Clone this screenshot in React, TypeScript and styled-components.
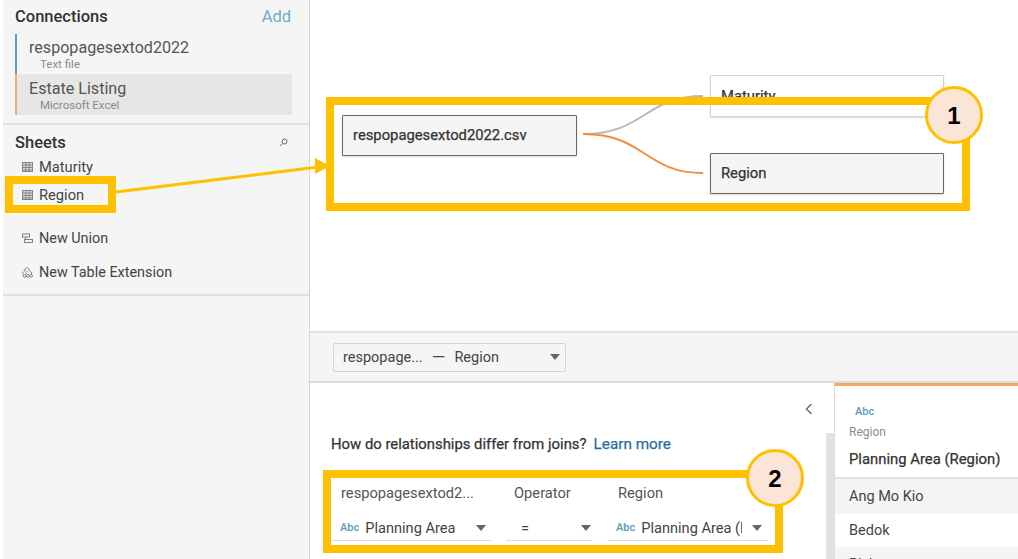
import styled, { createGlobalStyle } from 'styled-components'

const GlobalStyle = createGlobalStyle`
  html, body {
    margin: 0;
    padding: 0;
    background: #fff;
    font-family: Roboto, "Noto Sans", sans-serif;
    color: #333;
  }
  * { box-sizing: border-box; }
`

const Page = styled.div`
  position: relative;
  width: 1018px;
  height: 559px;
  overflow: hidden;
  display: flex;
  padding-left: 3px;
`

const Sidebar = styled.aside`
  width: 307px;
  height: 100%;
  flex: none;
  background: #f5f5f5;
  border-right: 1px solid #d6d6d6;
`

const Section = styled.section`
  border-bottom: 2px solid #e0e0e0;
`

const Connections = styled(Section)`
  height: 125px;
  padding: 5px 17px 0 12px;
`

const Sheets = styled(Section)`
  height: 171px;
  padding: 6px 17px 0 12px;
`

const SectionHead = styled.div`
  display: flex;
  justify-content: space-between;
  align-items: center;
  height: 22px;
`

const SectionTitle = styled.h2`
  margin: 0;
  font-size: 16.5px;
  font-weight: 500;
  color: #333;
`

const AddLink = styled.span`
  font-size: 16.5px;
  margin-right: 1px;
  color: #6bacc9;
`

const ConnectionList = styled.div`
  margin-top: 7px;
`

const Connection = styled.div<{ $color: string; $active?: boolean }>`
  height: ${p => (p.$active ? 41 : 40)}px;
  padding: ${p => (p.$active ? 5 : 4)}px 0 0 12px;
  border-left: 2px solid ${p => p.$color};
  background: ${p => (p.$active ? '#e6e6e6' : 'transparent')};
`

const ConnectionName = styled.div`
  font-size: 16.1px;
  line-height: 20px;
  color: #555;
`

const ConnectionType = styled.div`
  margin-left: 11px;
  font-size: 11.5px;
  line-height: 13px;
  color: #8a8a8a;
`

const SheetRow = styled.div<{ $gap?: number; $size?: number }>`
  display: flex;
  align-items: center;
  gap: 6px;
  height: 20px;
  margin-top: ${p => p.$gap ?? 0}px;
  padding-left: 7px;
  font-size: ${p => p.$size ?? 14.7}px;
  color: #444;
`

const Canvas = styled.div`
  position: relative;
  height: 333px;
  flex: none;
  background: #fff;
  border-bottom: 2px solid #e0e0e0;
`

const Node = styled.div<{ $x: number; $y: number; $w: number; $h: number; $muted?: boolean }>`
  position: absolute;
  left: ${p => p.$x}px;
  top: ${p => p.$y}px;
  width: ${p => p.$w}px;
  height: ${p => p.$h}px;
  display: flex;
  align-items: center;
  padding: 0 0 1px 10px;
  font-size: 14.8px;
  -webkit-text-stroke: 0.25px currentColor;
  color: #333;
  background: ${p => (p.$muted ? '#fff' : '#f5f5f5')};
  border: 1px solid ${p => (p.$muted ? '#d4d4d4' : '#666')};
  border-radius: 1px;
  box-shadow: 0 1px 2px rgba(0, 0, 0, 0.15);
`

const Curves = styled.svg`
  position: absolute;
  left: 0;
  top: 0;
`

const Main = styled.main`
  flex: 1;
  min-width: 0;
  display: flex;
  flex-direction: column;
`

const PairBar = styled.div`
  height: 50px;
  flex: none;
  display: flex;
  align-items: center;
  padding: 0 0 0 23px;
  background: #f5f5f5;
  border-bottom: 2px solid #dcdcdc;
`

const PairSelect = styled.div`
  width: 233px;
  height: 29px;
  display: flex;
  align-items: center;
  padding: 0 5px 0 9px;
  gap: 9px;
  font-size: 14.5px;
  color: #444;
  border: 1px solid #d4d4d4;
  border-radius: 2px;
  background: #f5f5f5;
`

const Dash = styled.span`
  font-size: 17.5px;
  line-height: 20px;
`

const Arrow = styled.span<{ $ml?: string }>`
  width: 0;
  height: 0;
  flex: none;
  margin-left: ${p => p.$ml ?? 'auto'};
  border-left: 5px solid transparent;
  border-right: 5px solid transparent;
  border-top: 6px solid #666;
`

const Lower = styled.div`
  flex: 1;
  min-height: 0;
  display: flex;
`

const RelationPane = styled.div`
  width: 524px;
  flex: none;
  position: relative;
  padding: 51px 0 0 21px;
  background: #fff;
`

const Chevron = styled.svg`
  position: absolute;
  left: 495px;
  top: 20px;
`

const Scrollbar = styled.div`
  position: absolute;
  right: 0;
  top: 50px;
  bottom: 0;
  width: 8px;
  background: #e2e2e2;
`

const HelpLine = styled.div`
  font-size: 14.85px;
  -webkit-text-stroke: 0.25px currentColor;
  line-height: 20px;
  color: #333;
`

const LearnMore = styled.span`
  margin-left: 7px;
  font-size: 15.3px;
  color: #1f6fa3;
`

const FieldGrid = styled.div`
  display: grid;
  grid-template-columns: 161px 87px 161px;
  column-gap: 14px;
  margin-top: 29px;
`

const FieldLabel = styled.div`
  height: 20px;
  padding-left: 10px;
  font-size: 14.7px;
  line-height: 20px;
  color: #555;
  white-space: nowrap;
`

const FieldLabelTight = styled(FieldLabel)`
  padding-left: 8px;
`

const RegionLabel = styled(FieldLabel)`
  padding-left: 11px;
`

const FieldSelect = styled.div`
  height: 28px;
  margin-top: 10px;
  display: flex;
  align-items: center;
  padding: 2px 6px 0 9px;
  border-bottom: 1px solid #dcdcdc;
  font-size: 14.6px;
  color: #444;
  overflow: hidden;
`

const TypeTag = styled.span`
  flex: none;
  font-size: 11px;
  font-weight: 500;
  color: #5b9bb8;
`

const FieldValue = styled.span<{ $w?: number }>`
  flex: none;
  margin-left: 6px;
  width: ${p => (p.$w ? `${p.$w}px` : 'auto')};
  overflow: hidden;
  white-space: nowrap;
`

const DataPane = styled.div`
  flex: 1;
  min-width: 0;
  background: #fff;
  border-top: 3px solid #f5a75f;
  border-left: 1px solid #dcdcdc;
`

const DataHead = styled.div`
  height: 93px;
  padding: 18px 0 0 14px;
  border-bottom: 2px solid #e2e2e2;
`

const DataTag = styled(TypeTag)`
  display: block;
  margin-left: 6px;
  line-height: 16px;
`

const DataSource = styled.div`
  margin-top: 5px;
  font-size: 12px;
  line-height: 14px;
  color: #8f8a96;
`

const DataField = styled.div`
  margin-top: 11px;
  font-size: 14.85px;
  -webkit-text-stroke: 0.25px currentColor;
  line-height: 18px;
  color: #333;
  white-space: nowrap;
`

const DataRow = styled.div<{ $shade?: boolean; $h: number }>`
  height: ${p => p.$h}px;
  display: flex;
  align-items: center;
  padding: 0 0 1px 14px;
  font-size: 14.5px;
  color: #444;
  background: ${p => (p.$shade ? '#f5f5f5' : '#fff')};
`

const Callout = styled.div<{ $x: number; $y: number; $w: number; $h: number }>`
  position: absolute;
  left: ${p => p.$x}px;
  top: ${p => p.$y}px;
  width: ${p => p.$w}px;
  height: ${p => p.$h}px;
  border: 8px solid #ffc000;
  pointer-events: none;
`

const Badge = styled.div<{ $x: number; $y: number }>`
  position: absolute;
  left: ${p => p.$x}px;
  top: ${p => p.$y}px;
  width: 58px;
  height: 58px;
  display: flex;
  align-items: center;
  justify-content: center;
  padding-top: 1px;
  border: 3px solid #ffc000;
  border-radius: 50%;
  background: #fbe5d6;
  font-family: "Liberation Sans", sans-serif;
  font-size: 24px;
  font-weight: 700;
  color: #000;
`

const Pointer = styled.svg`
  position: absolute;
  left: 0;
  top: 0;
  pointer-events: none;
`

const SearchSvg = styled.svg`
  margin-right: 4px;
`

const TableIcon = () => (
  <svg width="11" height="10" viewBox="0 0 11 10" fill="none" stroke="#858585" strokeWidth="1">
    <rect x="0.5" y="0.5" width="10" height="9" fill="#dcdcdc" />
    <path d="M0.5 3H10.5M0.5 5.5H10.5M0.5 8H10.5M3.8 0.5V9.5M7.2 0.5V9.5" />
  </svg>
)

const UnionIcon = () => (
  <svg width="11" height="11" viewBox="0 0 11 11" fill="none" stroke="#808080" strokeWidth="1">
    <rect x="0.5" y="1" width="7" height="3" />
    <rect x="2.5" y="6.5" width="8" height="3" />
    <path d="M3.5 4V6.5" />
  </svg>
)

const ExtensionIcon = () => (
  <svg width="11" height="12" viewBox="0 0 11 12" fill="none" stroke="#808080" strokeWidth="1">
    <path d="M1 8.5C0 6.5 2 5.5 2.5 5C2.5 3 4 1 5.5 2C7 2.5 7.5 4 7.5 5C9 5.5 10 6.5 9.5 8" />
    <path d="M4 4.5L6 6.5M3.5 6.5L5 8" />
    <circle cx="2.5" cy="9.8" r="1.4" />
    <circle cx="5.8" cy="9.8" r="1.4" />
    <circle cx="9.1" cy="9.8" r="1.4" />
  </svg>
)

const SearchIcon = () => (
  <SearchSvg width="9" height="9" viewBox="0 0 9 9" fill="none" stroke="#666" strokeWidth="1">
    <circle cx="5.5" cy="3.5" r="2.5" />
    <path d="M3.5 5.5L1 8" />
  </SearchSvg>
)

export default function App() {
  return (
    <Page>
      <GlobalStyle />
      <Sidebar>
        <Connections>
          <SectionHead>
            <SectionTitle>Connections</SectionTitle>
            <AddLink>Add</AddLink>
          </SectionHead>
          <ConnectionList>
            <Connection $color="#5b9fc2">
              <ConnectionName>respopagesextod2022</ConnectionName>
              <ConnectionType>Text file</ConnectionType>
            </Connection>
            <Connection $color="#f5ad6b" $active>
              <ConnectionName>Estate Listing</ConnectionName>
              <ConnectionType>Microsoft Excel</ConnectionType>
            </Connection>
          </ConnectionList>
        </Connections>
        <Sheets>
          <SectionHead>
            <SectionTitle>Sheets</SectionTitle>
            <SearchIcon />
          </SectionHead>
          <SheetRow $gap={4}><TableIcon />Maturity</SheetRow>
          <SheetRow $gap={8}><TableIcon />Region</SheetRow>
          <SheetRow $gap={23} $size={14.4}><UnionIcon />New Union</SheetRow>
          <SheetRow $gap={14} $size={14.4}><ExtensionIcon />New Table Extension</SheetRow>
        </Sheets>
      </Sidebar>
      <Main>
        <Canvas>
          <Curves width="708" height="332" fill="none" strokeWidth="2">
            <path d="M273 134C335 134 335 96 393 96" stroke="#b8b8b8" />
            <path d="M273 134C335 134 335 173 393 173" stroke="#f28e3f" />
          </Curves>
          <Node $x={32} $y={115} $w={235} $h={41}>respopagesextod2022.csv</Node>
          <Node $x={400} $y={75} $w={234} $h={42} $muted>Maturity</Node>
          <Node $x={400} $y={153} $w={234} $h={41}>Region</Node>
        </Canvas>
        <PairBar>
          <PairSelect>
            respopage...<Dash>—</Dash>Region<Arrow />
          </PairSelect>
        </PairBar>
        <Lower>
          <RelationPane>
            <Chevron width="8" height="12" viewBox="0 0 8 12" fill="none" stroke="#666" strokeWidth="1.3">
              <path d="M6.5 1L1.5 6L6.5 11" />
            </Chevron>
            <Scrollbar />
            <HelpLine>
              How do relationships differ from joins?<LearnMore>Learn more</LearnMore>
            </HelpLine>
            <FieldGrid>
              <FieldLabel>respopagesextod2...</FieldLabel>
              <FieldLabelTight>Operator</FieldLabelTight>
              <RegionLabel>Region</RegionLabel>
              <FieldSelect>
                <TypeTag>Abc</TypeTag>
                <FieldValue>Planning Area</FieldValue>
                <Arrow />
              </FieldSelect>
              <FieldSelect>
                <FieldValue $w={60}>=</FieldValue>
                <Arrow />
              </FieldSelect>
              <FieldSelect>
                <TypeTag>Abc</TypeTag>
                <FieldValue $w={101}>Planning Area (Region)</FieldValue>
                <Arrow />
              </FieldSelect>
            </FieldGrid>
          </RelationPane>
          <DataPane>
            <DataHead>
              <DataTag>Abc</DataTag>
              <DataSource>Region</DataSource>
              <DataField>Planning Area (Region)</DataField>
            </DataHead>
            <DataRow $shade $h={35}>Ang Mo Kio</DataRow>
            <DataRow $h={33}>Bedok</DataRow>
            <DataRow $shade $h={35}>Bishan</DataRow>
          </DataPane>
        </Lower>
      </Main>
      <Callout $x={5} $y={176} $w={111} $h={37} />
      <Callout $x={326} $y={97} $w={644} $h={114} />
      <Callout $x={323} $y={470} $w={460} $h={83} />
      <Pointer width="340" height="220" fill="none">
        <path d="M116 192L318 167" stroke="#ffc000" strokeWidth="3" />
        <path d="M315 158L330 166L315 174Z" fill="#ffc000" />
      </Pointer>
      <Badge $x={925} $y={86}>1</Badge>
      <Badge $x={746} $y={449}>2</Badge>
    </Page>
  )
}
